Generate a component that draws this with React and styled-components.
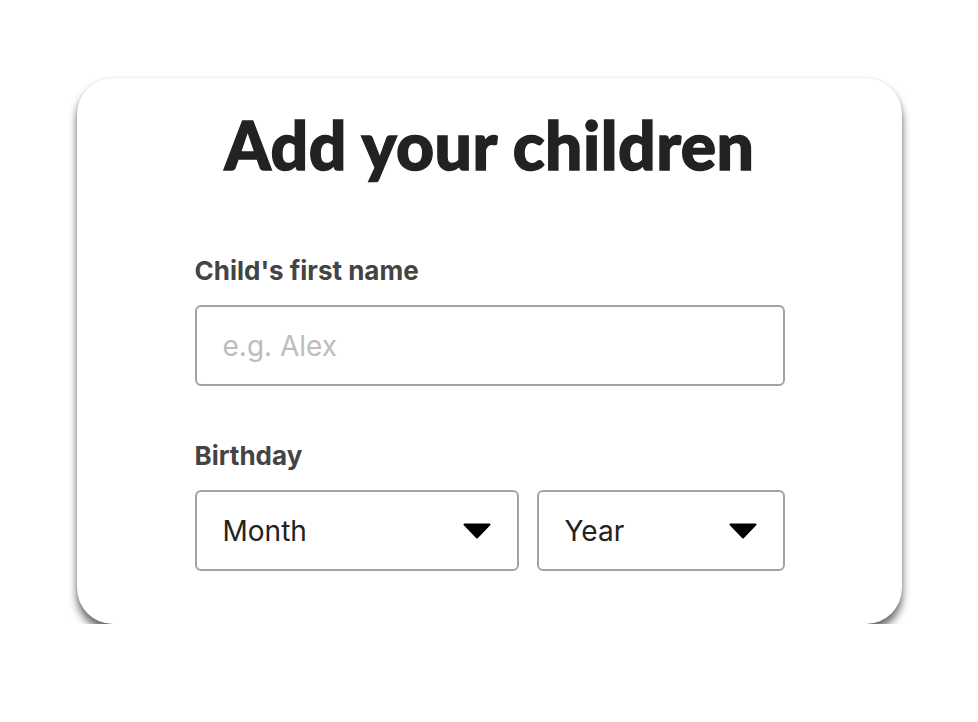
import React from "react"
import styled, { createGlobalStyle } from "styled-components"

const GlobalStyle = createGlobalStyle`
  body {
    margin: 0;
    background: #fff;
    font-family: "Inter", "Liberation Sans", sans-serif;
  }
`

const Page = styled.div`
  padding: 78px 0 0 77px;
`

const Card = styled.div`
  width: 825px;
  height: 546px;
  box-sizing: border-box;
  padding: 28px 0 0;
  background: #fff;
  border-radius: 36px;
  box-shadow: 0 7px 9px rgba(0, 0, 0, 0.6), 0 0 3px rgba(0, 0, 0, 0.1);
`

const Title = styled.h1`
  margin: 0;
  font-family: "Lato", "Inter", sans-serif;
  font-weight: 900;
  font-size: 66px;
  line-height: 78px;
  letter-spacing: 0.5px;
  color: #222;
  -webkit-text-stroke: 1.4px #222;
  text-align: center;
`

const Form = styled.div`
  width: 590px;
  margin: 72px auto 0;
  display: flex;
  flex-direction: column;
  gap: 55px;
`

const Field = styled.div`
  display: flex;
  flex-direction: column;
  gap: 19px;
`

const Label = styled.label`
  font-size: 26px;
  line-height: 30px;
  font-weight: 700;
  color: #444;
`

const Box = styled.div`
  box-sizing: border-box;
  height: 81px;
  border: 2px solid #a3a3a3;
  border-radius: 6px;
  background: #fff;
  display: flex;
  align-items: center;
  padding: 0 26px;
  font-size: 28px;
  color: ${(p) => (p.$placeholder ? "#bdbdbd" : "#222")};
`

const Row = styled.div`
  display: grid;
  grid-template-columns: 324px 1fr;
  gap: 18px;
`

const SelectText = styled.span`
  flex: 1;
`

const Caret = () => (
  <svg width="28" height="16" viewBox="0 0 28 16">
    <path d="M1.5 1.5 H26.5 L14 14.5 Z" fill="#000" stroke="#000" strokeWidth="2" strokeLinejoin="round" />
  </svg>
)

const Select = ({ label }) => (
  <Box>
    <SelectText>{label}</SelectText>
    <Caret />
  </Box>
)

export default function App() {
  return (
    <>
      <GlobalStyle />
      <Page>
        <Card>
          <Title>Add your children</Title>
          <Form>
            <Field>
              <Label>Child's first name</Label>
              <Box $placeholder>e.g. Alex</Box>
            </Field>
            <Field>
              <Label>Birthday</Label>
              <Row>
                <Select label="Month" />
                <Select label="Year" />
              </Row>
            </Field>
          </Form>
        </Card>
      </Page>
    </>
  )
}
